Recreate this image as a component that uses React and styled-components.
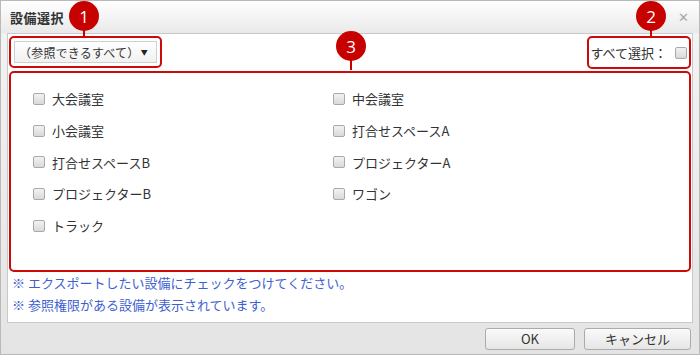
import React from 'react';
import styled, { createGlobalStyle } from 'styled-components';

const GlobalStyle = createGlobalStyle`
  html, body {
    margin: 0;
    padding: 0;
    background: #ffffff;
  }
  body {
    font-family: "Noto Sans CJK JP", "Noto Sans", "Liberation Sans", sans-serif;
    font-size: 12px;
    color: #333;
  }
`;

const Dialog = styled.div`
  position: relative;
  box-sizing: border-box;
  width: 700px;
  height: 355px;
  border: 1px solid #b9b9b9;
  background: linear-gradient(#f4f4f4, #e4e4e4);
  display: flex;
  flex-direction: column;
`;

const TitleBar = styled.div`
  height: 32px;
  flex-shrink: 0;
  display: flex;
  align-items: center;
  justify-content: space-between;
  padding: 0 10px 0 9px;
  background: linear-gradient(#ffffff, #e9e9e9);
`;

const Title = styled.h1`
  margin: 0;
  font-size: 13px;
  font-weight: 700;
  color: #333;
  letter-spacing: 0.5px;
`;

const Close = styled.span`
  font-size: 13px;
  font-weight: 700;
  line-height: 1;
  color: #a8a8a8;
  font-family: "DejaVu Sans", sans-serif;
  cursor: pointer;
`;

const Panel = styled.div`
  flex: 1;
  margin: 0 6px;
  border: 1px solid #c9c9c9;
  background: #ffffff;
  padding: 2px 1px 0 1px;
  display: flex;
  flex-direction: column;
`;

const TopRow = styled.div`
  display: flex;
  justify-content: space-between;
  align-items: flex-start;
`;

const Mark = styled.div`
  box-sizing: border-box;
  border: 2px solid #cc0a0a;
  border-radius: 5px;
  padding: ${(p) => p.$pad || '3px'};
`;

const Select = styled.div`
  box-sizing: border-box;
  width: 143px;
  height: 22px;
  border: 1px solid #cfcfcf;
  background: linear-gradient(#ffffff, #f1f1f1);
  display: flex;
  align-items: center;
  justify-content: space-between;
  padding: 0 8px 0 4px;
  font-size: 12px;
  letter-spacing: 0.2px;
  white-space: nowrap;
  color: #333;
`;

const Arrow = styled.span`
  font-size: 7px;
  color: #222;
`;

const SelectAll = styled.label`
  display: flex;
  align-items: center;
  height: 23px;
  padding: 0 0 0 1px;
  font-size: 13px;
  color: #333;
  gap: 8px;
`;

const Box = styled.span`
  display: inline-block;
  box-sizing: border-box;
  width: 12px;
  height: 12px;
  border: 1px solid #a9a9a9;
  border-radius: 2px;
  background: linear-gradient(#f2f2f2, #d9d9d9);
  flex-shrink: 0;
`;

const ListMark = styled(Mark)`
  margin-top: 2px;
  height: 201px;
  padding: 10px 0 0 22px;
`;

const Grid = styled.div`
  display: grid;
  grid-template-columns: 300px 300px;
  grid-auto-rows: 31.7px;
`;

const Item = styled.label`
  display: flex;
  align-items: center;
  gap: 7px;
  font-size: 13px;
  color: #333;
`;

const Notes = styled.div`
  padding: 2px 0 0 3px;
  display: flex;
  flex-direction: column;
  gap: 4px;
`;

const Note = styled.p`
  margin: 0;
  font-size: 13px;
  line-height: 18px;
  color: #3d5fd0;
`;

const Footer = styled.div`
  height: 31px;
  flex-shrink: 0;
  display: flex;
  justify-content: flex-end;
  align-items: center;
  gap: 9px;
  padding: 0 8px 0 0;
`;

const Button = styled.button`
  box-sizing: border-box;
  width: ${(p) => p.$w}px;
  height: 22px;
  border: 1px solid #ababab;
  border-radius: 3px;
  background: linear-gradient(#fafafa, #e6e6e6);
  font-family: inherit;
  font-size: 13px;
  color: #333;
  padding: 0;
`;

const Badge = styled.div`
  position: absolute;
  left: ${(p) => p.$x - 15}px;
  top: ${(p) => p.$y - 15}px;
  width: 30px;
  height: 30px;
  border-radius: 50%;
  background: #c70000;
  color: #fff;
  font-family: "Open Sans", "Liberation Sans", sans-serif;
  font-size: 17px;
  display: flex;
  align-items: center;
  justify-content: center;
  &::after {
    content: '';
    position: absolute;
    left: 14px;
    top: 29px;
    width: 2px;
    height: ${(p) => p.$line}px;
    background: #c70000;
  }
`;

const left = ['大会議室', '小会議室', '打合せスペースB', 'プロジェクターB', 'トラック'];
const right = ['中会議室', '打合せスペースA', 'プロジェクターA', 'ワゴン'];

const items = [];
left.forEach((name, i) => {
  items.push(name);
  if (right[i]) items.push(right[i]);
  else if (i < left.length - 1) items.push(null);
});

export default function App() {
  return (
    <>
      <GlobalStyle />
      <Dialog>
        <TitleBar>
          <Title>設備選択</Title>
          <Close>✕</Close>
        </TitleBar>
        <Panel>
          <TopRow>
            <Mark>
              <Select>
                <span>（参照できるすべて）</span>
                <Arrow>▼</Arrow>
              </Select>
            </Mark>
            <Mark $pad="3px 2px 3px 0">
              <SelectAll>
                すべて選択：<Box />
              </SelectAll>
            </Mark>
          </TopRow>
          <ListMark>
            <Grid>
              {items.map((name, i) =>
                name ? (
                  <Item key={i}>
                    <Box />
                    {name}
                  </Item>
                ) : (
                  <span key={i} />
                )
              )}
            </Grid>
          </ListMark>
          <Notes>
            <Note>※ エクスポートしたい設備にチェックをつけてください。</Note>
            <Note>※ 参照権限がある設備が表示されています。</Note>
          </Notes>
        </Panel>
        <Footer>
          <Button $w={90}>OK</Button>
          <Button $w={107}>キャンセル</Button>
        </Footer>
        <Badge $x={83} $y={15} $line={7}>1</Badge>
        <Badge $x={650} $y={15} $line={6}>2</Badge>
        <Badge $x={350} $y={45} $line={10}>3</Badge>
      </Dialog>
    </>
  );
}
